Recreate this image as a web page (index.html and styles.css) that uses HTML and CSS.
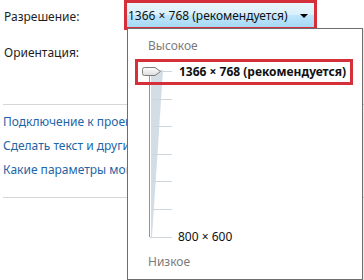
FILE: index.html
```html
<!DOCTYPE html>
<html lang="ru">
<head>
  <meta charset="UTF-8">
  <meta name="viewport" content="width=device-width, initial-scale=1.0">
  <title>Разрешение экрана</title>
  <link rel="stylesheet" href="styles.css">
</head>
<body>
<div class="settings">
  <div class="field">
    <label class="field-label">Разрешение:</label>
    <div class="combo">
      <span class="combo-text">1366 × 768 (рекомендуется)</span>
      <span class="combo-arrow"></span>
    </div>
  </div>
  <div class="field field-second">
    <label class="field-label">Ориентация:</label>
  </div>

  <div class="links">
    <a class="link" href="#">Подключение к проектору (или нажмите клавишу)</a>
    <a class="link" href="#">Сделать текст и другие элементы больше или меньше</a>
    <a class="link" href="#">Какие параметры монитора следует выбрать?</a>
  </div>
</div>

<div class="dropdown">
  <svg class="track" width="234" height="250" viewBox="128 29 234 250">
    <defs>
      <linearGradient id="thumb-fill" x1="0" y1="0" x2="0" y2="1">
        <stop offset="0" stop-color="#ffffff"/>
        <stop offset="1" stop-color="#dcdcdc"/>
      </linearGradient>
    </defs>
    <polygon points="151,70 163,70 152,237 151,237" fill="#d3dde6"/>
    <line x1="149.5" y1="75" x2="149.5" y2="237" stroke="#8e9499"/>
    <g stroke="#cdd6dd">
      <line x1="152" y1="71.5" x2="172" y2="71.5"/>
      <line x1="152" y1="99.5" x2="172" y2="99.5"/>
      <line x1="152" y1="126.5" x2="172" y2="126.5"/>
      <line x1="152" y1="154.5" x2="172" y2="154.5"/>
      <line x1="152" y1="181.5" x2="172" y2="181.5"/>
      <line x1="152" y1="209.5" x2="172" y2="209.5"/>
      <line x1="150" y1="237.5" x2="172" y2="237.5"/>
    </g>
    <path d="M144.5,67.5 H155 L160.5,71.5 L155,75.5 H144.5 Q142.5,75.5 142.5,73.5 V69.5 Q142.5,67.5 144.5,67.5 Z" fill="url(#thumb-fill)" stroke="#7d7d7d"/>
  </svg>
  <div class="level">Высокое</div>
  <div class="option option-current">1366 × 768 (рекомендуется)</div>
  <div class="option option-low">800 × 600</div>
  <div class="level level-low">Низкое</div>
</div>
</body>
</html>
```

FILE: styles.css
```css
body {
  margin: 0;
  width: 364px;
  height: 280px;
  overflow: hidden;
  background: #fff;
  font-family: "Noto Sans", "DejaVu Sans", sans-serif;
  font-size: 12px;
  color: #1e1e1e;
}

.settings {
  padding-left: 4px;
}

.field {
  display: flex;
  align-items: center;
  height: 30px;
}

.field-second {
  margin-top: 16px;
  height: 10px;
}

.field-label {
  width: 120px;
  flex: none;
  padding-top: 3px;
}

.combo {
  box-sizing: border-box;
  width: 193px;
  height: 30px;
  border: 3px solid #d5303a;
  background: linear-gradient(#eaf6fd 0%, #d9f0fc 48%, #bee6fd 52%, #a7d9f5 100%);
  display: flex;
  align-items: center;
  padding: 0 6px 0 1px;
  white-space: nowrap;
}

.combo-text {
  flex: 1;
  color: #111;
}

.combo-arrow {
  width: 0;
  height: 0;
  border-left: 4px solid transparent;
  border-right: 4px solid transparent;
  border-top: 4px solid #000;
  margin-top: 2px;
}

.links {
  margin-top: 48px;
  margin-left: -1px;
  border-top: 1px solid #d6d6d6;
  border-bottom: 1px solid #d6d6d6;
  padding: 5px 0 15px;
  white-space: nowrap;
}

.link {
  display: block;
  line-height: 24px;
  color: #1d65a6;
  text-decoration: none;
}

.dropdown {
  position: absolute;
  left: 127px;
  top: 28px;
  box-sizing: border-box;
  width: 236px;
  height: 252px;
  border: 1px solid #6e6e6e;
  background: #fff;
  box-shadow: 1px 1px 2px rgba(0, 0, 0, 0.12);
}

.track {
  position: absolute;
  left: 0;
  top: 0;
}

.level {
  position: relative;
  margin-top: 9px;
  padding-left: 20px;
  line-height: 16px;
  color: #7b7b7b;
}

.level-low {
  margin-top: 9px;
}

.option {
  position: relative;
  white-space: nowrap;
  color: #111;
}

.option-current {
  margin: 5px 9px 0 7px;
  border: 3px solid #d5303a;
  line-height: 20px;
  padding-left: 41px;
  font-weight: bold;
}

.option-low {
  margin-top: 144px;
  padding-left: 50px;
  line-height: 16px;
}
```
